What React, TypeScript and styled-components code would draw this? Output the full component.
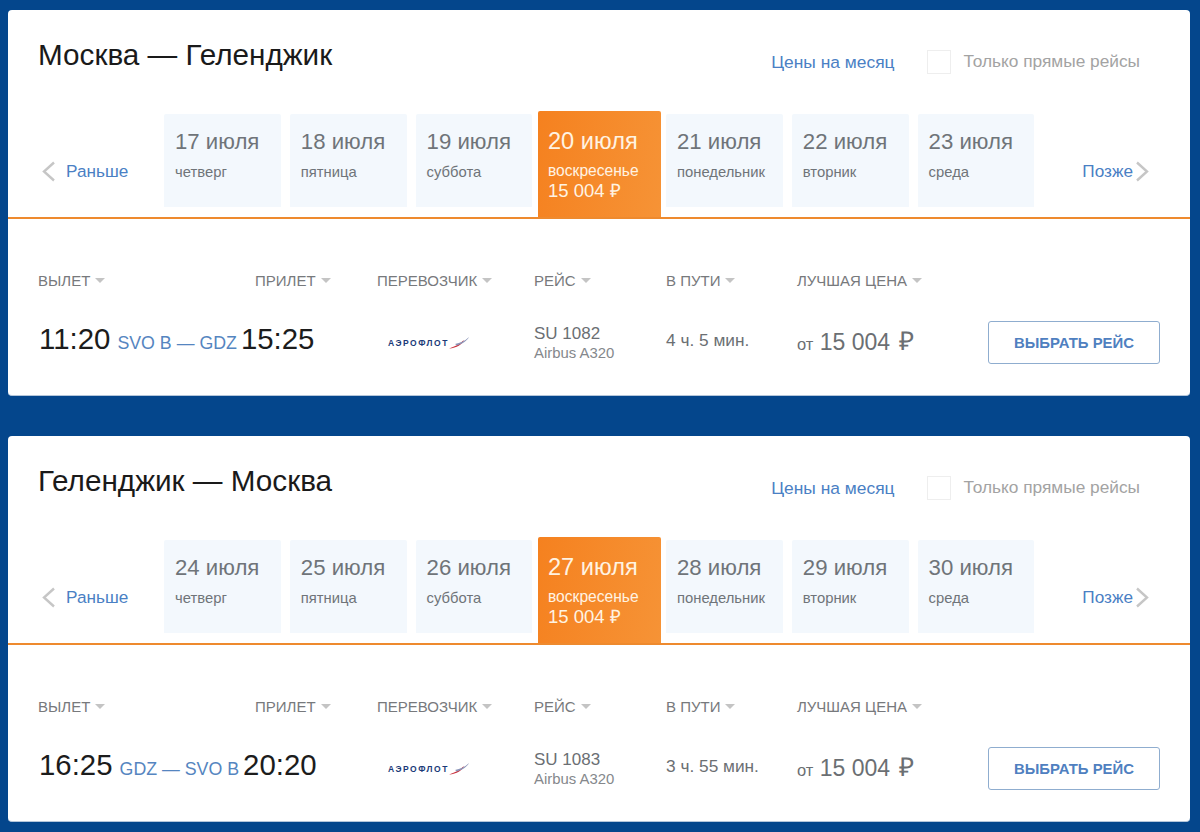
import styled, { createGlobalStyle } from "styled-components";

const GlobalStyle = createGlobalStyle`
  html, body {
    margin: 0;
    background: #04468c;
    font-family: "Liberation Sans", Arial, sans-serif;
  }
`;

const Page = styled.div`
  display: flex;
  flex-direction: column;
  gap: 40px;
  width: 1200px;
  height: 832px;
  padding: 10px 10px 0 8px;
  box-sizing: border-box;
  overflow: hidden;
`;

const Card = styled.section`
  height: 386px;
  background: #fff;
  border-radius: 4px;
  border-bottom: 1px solid #b4c6da;
  box-sizing: border-box;
`;

const Header = styled.header`
  display: flex;
  align-items: flex-start;
  height: 101px;
  padding: 28px 50px 0 30px;
  box-sizing: border-box;
`;

const Title = styled.h2`
  flex: 1;
  margin: 0;
  font-size: 29.7px;
  line-height: 34px;
  font-weight: 400;
  color: #1a1a1a;
`;

const MonthLink = styled.a`
  margin: 14px 32px 0 0;
  font-size: 17.4px;
  line-height: 20px;
  color: #4a80c4;
`;

const DirectOnly = styled.label`
  display: flex;
  align-items: center;
  gap: 13px;
  margin-top: 11px;
  font-size: 17.3px;
  line-height: 25px;
  color: #a3a3a3;
`;

const CheckBox = styled.span`
  width: 24px;
  height: 24px;
  border: 1px solid #eeeeee;
  box-sizing: border-box;
`;

const DatesRow = styled.div`
  display: flex;
  align-items: flex-end;
  height: 108px;
  border-bottom: 2px solid #ee8a2e;
  box-sizing: border-box;
`;

const Pager = styled.a<{ $next?: boolean }>`
  display: flex;
  align-items: center;
  justify-content: ${(p) => (p.$next ? "flex-end" : "flex-start")};
  gap: ${(p) => (p.$next ? "2px" : "10px")};
  width: ${(p) => (p.$next ? "116px" : "156px")};
  height: 22px;
  margin-bottom: 35px;
  padding-left: ${(p) => (p.$next ? "0" : "33px")};
  box-sizing: border-box;
  font-size: 17.2px;
  color: #4a80c4;
`;

const Days = styled.div`
  display: flex;
  align-items: flex-end;
  gap: 9px;
  width: 870px;
`;

const Day = styled.div<{ $active?: boolean }>`
  flex: none;
  width: ${(p) => (p.$active ? "123px" : "116.8px")};
  height: ${(p) => (p.$active ? "106px" : "93px")};
  margin: ${(p) => (p.$active ? "0 -4px 0 -3.4px" : "0 0 10px 0")};
  padding: ${(p) => (p.$active ? "16px 0 0 10px" : "14px 0 0 11px")};
  box-sizing: border-box;
  border-radius: 2px 2px 0 0;
  background: ${(p) => (p.$active ? "linear-gradient(100deg, #f5811f, #f69336)" : "#f3f8fd")};
  color: ${(p) => (p.$active ? "#fff3e2" : "#6f7479")};
`;

const DayDate = styled.div<{ $active?: boolean }>`
  font-size: ${(p) => (p.$active ? "23.6px" : "22.2px")};
  line-height: 28px;
`;

const DayName = styled.div<{ $active?: boolean }>`
  margin-top: 6px;
  font-size: ${(p) => (p.$active ? "15.6px" : "14.8px")};
  line-height: 20px;
`;

const DayPrice = styled.div`
  font-size: 18.5px;
  line-height: 20px;
`;

const Columns = "217px 122px 157px 132px 131px 191px 172px";

const TableHead = styled.div`
  display: grid;
  grid-template-columns: ${Columns};
  height: 46px;
  margin-top: 50px;
  padding-left: 30px;
  box-sizing: border-box;
`;

const HeadCell = styled.div`
  display: flex;
  align-items: center;
  gap: 5px;
  height: 22px;
  font-size: 15px;
  color: #77797c;
`;

const Caret = styled.span`
  width: 0;
  height: 0;
  border-left: 5px solid transparent;
  border-right: 5px solid transparent;
  border-top: 5px solid #c4c4c4;
`;

const FlightRow = styled.div`
  display: grid;
  grid-template-columns: ${Columns};
  align-items: center;
  height: 44px;
  padding-left: 30px;
  box-sizing: border-box;
`;

const Times = styled.div`
  display: flex;
  align-items: baseline;
  gap: 7px;
  margin: -2px 0 0 1px;
  white-space: nowrap;
`;

const Time = styled.span`
  font-size: 29.4px;
  color: #1c1c1c;
`;

const Route = styled.span`
  font-size: 17.8px;
  color: #5585c0;
`;

const ArrivalTime = styled(Time)`
  margin-left: -3px;
`;

const Logo = styled.div`
  display: flex;
  align-items: center;
  margin: 6px 0 0 11px;
  color: #1b3a78;
  font-size: 8.5px;
  font-weight: 700;
  letter-spacing: 1.5px;
  white-space: nowrap;
`;

const FlightInfo = styled.div`
  margin-top: 8px;
  color: #6b6f73;
`;

const FlightNumber = styled.div`
  font-size: 17px;
  line-height: 20px;
`;

const Plane = styled.div`
  font-size: 14.9px;
  line-height: 19px;
  color: #85888c;
`;

const Duration = styled.div`
  margin-top: 2px;
  font-size: 17.3px;
  color: #6b6f73;
`;

const Price = styled.div`
  font-size: 23px;
  color: #6b6f73;
  white-space: nowrap;
  small {
    font-size: 16.5px;
  }
`;

const PriceCurrency = styled.span`
  margin-left: 2px;
  font-size: 26px;
`;

const SelectButton = styled.button`
  height: 43px;
  margin-top: 6px;
  background: #fff;
  border: 1px solid #8fadcf;
  border-radius: 3px;
  font-family: inherit;
  font-size: 14.9px;
  font-weight: 700;
  color: #4f80c0;
`;

const Chevron = ({ left }: { left?: boolean }) => (
  <svg width="15" height="21" viewBox="0 0 15 21" fill="none" stroke="#c6c6c6" strokeWidth="2.4">
    <path d={left ? "M13 1.5 3 10.5l10 9" : "M2 1.5l10 9-10 9"} />
  </svg>
);

const Wing = () => (
  <svg width="20" height="12" viewBox="0 0 20 12">
    <path d="M0 11.5C5 10 11 7 15 3c-2 4.500-7 8-15 8.500z" fill="#c8303c" />
    <path d="M6 7c5-1 10-3 14-7-2 4-7 7-12 8.500z" fill="#8a94b8" />
  </svg>
);

type Leg = {
  title: string;
  days: { date: string; name: string }[];
  activeIndex: number;
  depart: string;
  route: string;
  arrive: string;
  flight: string;
  duration: string;
};

const weekdays = ["четверг", "пятница", "суббота", "воскресенье", "понедельник", "вторник", "среда"];

const legs: Leg[] = [
  {
    title: "Москва — Геленджик",
    days: [17, 18, 19, 20, 21, 22, 23].map((d, i) => ({ date: `${d} июля`, name: weekdays[i] })),
    activeIndex: 3,
    depart: "11:20",
    route: "SVO B — GDZ",
    arrive: "15:25",
    flight: "SU 1082",
    duration: "4 ч. 5 мин.",
  },
  {
    title: "Геленджик — Москва",
    days: [24, 25, 26, 27, 28, 29, 30].map((d, i) => ({ date: `${d} июля`, name: weekdays[i] })),
    activeIndex: 3,
    depart: "16:25",
    route: "GDZ — SVO B",
    arrive: "20:20",
    flight: "SU 1083",
    duration: "3 ч. 55 мин.",
  },
];

const headers = ["ВЫЛЕТ", "ПРИЛЕТ", "ПЕРЕВОЗЧИК", "РЕЙС", "В ПУТИ", "ЛУЧШАЯ ЦЕНА"];

function FlightCard({ leg }: { leg: Leg }) {
  return (
    <Card>
      <Header>
        <Title>{leg.title}</Title>
        <MonthLink>Цены на месяц</MonthLink>
        <DirectOnly>
          <CheckBox />
          Только прямые рейсы
        </DirectOnly>
      </Header>

      <DatesRow>
        <Pager>
          <Chevron left />
          Раньше
        </Pager>
        <Days>
          {leg.days.map((day, i) => {
            const active = i === leg.activeIndex;
            return (
              <Day key={day.date} $active={active}>
                <DayDate $active={active}>{day.date}</DayDate>
                <DayName $active={active}>{day.name}</DayName>
                {active && <DayPrice>15 004 ₽</DayPrice>}
              </Day>
            );
          })}
        </Days>
        <Pager $next>
          Позже
          <Chevron />
        </Pager>
      </DatesRow>

      <TableHead>
        {headers.map((h) => (
          <HeadCell key={h}>
            {h}
            <Caret />
          </HeadCell>
        ))}
      </TableHead>

      <FlightRow>
        <Times>
          <Time>{leg.depart}</Time>
          <Route>{leg.route}</Route>
          <ArrivalTime>{leg.arrive}</ArrivalTime>
        </Times>
        <div />
        <Logo>
          АЭРОФЛОТ
          <Wing />
        </Logo>
        <FlightInfo>
          <FlightNumber>{leg.flight}</FlightNumber>
          <Plane>Airbus A320</Plane>
        </FlightInfo>
        <Duration>{leg.duration}</Duration>
        <Price>
          <small>от</small> 15 004 <PriceCurrency>₽</PriceCurrency>
        </Price>
        <SelectButton>ВЫБРАТЬ РЕЙС</SelectButton>
      </FlightRow>
    </Card>
  );
}

export default function App() {
  return (
    <Page>
      <GlobalStyle />
      {legs.map((leg) => (
        <FlightCard key={leg.title} leg={leg} />
      ))}
    </Page>
  );
}
